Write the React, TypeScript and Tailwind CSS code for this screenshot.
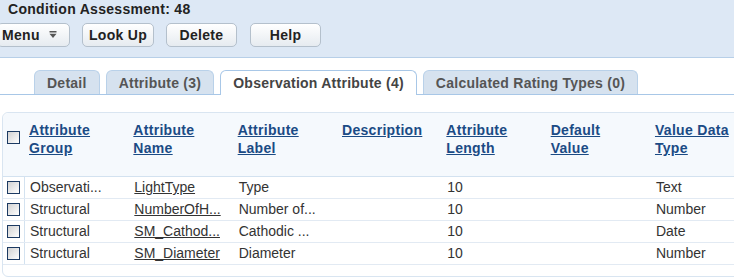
import React from "react";

const HeaderLink = ({ lines }: { lines: string[] }) => (
  <a href="#" className="text-[#1b4b85] font-bold underline tracking-[0.3px]">
    {lines.map((l, i) => (
      <React.Fragment key={i}>
        {i > 0 && <br />}
        {l}
      </React.Fragment>
    ))}
  </a>
);

const Checkbox = () => (
  <div className="w-[13px] h-[13px] border border-[#1c3a62] bg-linear-to-br from-[#d2d2d2] to-white" />
);

const btnBase =
  "h-[24px] pt-[3px] border border-[#b4c0cc] rounded-[5px] bg-linear-to-b from-white to-[#e6ebf0] text-[14px] font-bold leading-[16px] tracking-[0.3px] text-[#222] flex items-start shrink-0";

const columns: string[][] = [
  ["Attribute", "Group"],
  ["Attribute", "Name"],
  ["Attribute", "Label"],
  ["Description"],
  ["Attribute", "Length"],
  ["Default", "Value"],
  ["Value Data", "Type"],
];

type Row = { group: string; name: string; label: string; len: string; type: string };
const rows: Row[] = [
  { group: "Observati...", name: "LightType", label: "Type", len: "10", type: "Text" },
  { group: "Structural", name: "NumberOfH...", label: "Number of...", len: "10", type: "Number" },
  { group: "Structural", name: "SM_Cathod...", label: "Cathodic ...", len: "10", type: "Date" },
  { group: "Structural", name: "SM_Diameter", label: "Diameter", len: "10", type: "Number" },
];

const tabBase =
  "px-[12px] pt-[4px] border border-b-0 rounded-t-[6px] font-bold leading-[16px] tracking-[0.25px] whitespace-nowrap";

export default function App() {
  return (
    <div className="w-[734px] h-[279px] overflow-hidden bg-white font-['Liberation_Sans',Arial,sans-serif] text-[14px]">
      <div className="h-[58px] bg-[#dde8f5] border-b border-[#b7cfe8]">
        <div className="pl-[8px] pt-[1px] font-bold leading-[16px] tracking-[0.3px] text-[#222]">
          Condition Assessment: 48
        </div>
        <div className="flex ml-[-3px] mt-[6px]">
          <button className={btnBase + " w-[73px] pl-[4px]"}>
            <span>Menu</span>
            <svg width="8" height="8" viewBox="0 0 8 8" className="mt-[4px] ml-[9px]">
              <rect x="0.5" y="0" width="7" height="1.5" fill="#555" />
              <polygon points="0.5,2.8 7.5,2.8 4,7" fill="#555" />
            </svg>
          </button>
          <button className={btnBase + " w-[72px] ml-[12px] justify-center"}>Look Up</button>
          <button className={btnBase + " w-[71px] ml-[12px] justify-center"}>Delete</button>
          <button className={btnBase + " w-[71px] ml-[13px] justify-center"}>Help</button>
        </div>
      </div>

      <div className="mt-[12px] h-[25px] border-b border-[#a8c7e7] flex items-end pl-[34px] gap-[6px]">
        <div className={tabBase + " h-[24px] border-[#b9d1e9] bg-[#d6e2ef] text-[#555]"}>Detail</div>
        <div className={tabBase + " h-[24px] border-[#b9d1e9] bg-[#d6e2ef] text-[#555] px-[11px]"}>Attribute (3)</div>
        <div className={tabBase + " h-[25px] -mb-px border-[#a8c7e7] bg-white text-[#444]"}>
          Observation Attribute (4)
        </div>
        <div className={tabBase + " h-[24px] border-[#b9d1e9] bg-[#d6e2ef] text-[#555]"}>
          Calculated Rating Types (0)
        </div>
      </div>

      <div className="mt-[17px] ml-[2px] w-[790px] border border-[#d9e5f1] rounded-[6px] pb-[11px]">
        <div className="flex h-[64px] bg-[#f5f9fd] border-b border-[#d3e2f0] rounded-t-[6px]">
          <div className="w-[21px] pl-[4px] pt-[18px]">
            <Checkbox />
          </div>
          {columns.map((c, i) => (
            <div key={i} className="w-[104.33px] shrink-0 pl-[5px] pt-[8px] leading-[18px]">
              <HeaderLink lines={c} />
            </div>
          ))}
        </div>
        {rows.map((r, i) => (
          <div key={i} className="flex h-[22px] border-b border-[#e2eaf3] text-[#333] leading-[16px]">
            <div className="w-[22px] pl-[4px] pt-[4px] border-r border-[#d3e2f0]">
              <Checkbox />
            </div>
            <div className="w-[104.33px] shrink-0 pl-[5px] pt-[2px] whitespace-nowrap">{r.group}</div>
            <div className="w-[104.33px] shrink-0 pl-[5px] pt-[2px] whitespace-nowrap">
              <a href="#" className="underline text-[#333]">{r.name}</a>
            </div>
            <div className="w-[104.33px] shrink-0 pl-[5px] pt-[2px] whitespace-nowrap">{r.label}</div>
            <div className="w-[104.33px] shrink-0 pl-[5px] pt-[2px]"></div>
            <div className="w-[104.33px] shrink-0 pl-[5px] pt-[2px]">{r.len}</div>
            <div className="w-[104.33px] shrink-0 pl-[5px] pt-[2px]"></div>
            <div className="w-[104.33px] shrink-0 pl-[5px] pt-[2px]">{r.type}</div>
          </div>
        ))}
      </div>
    </div>
  );
}
